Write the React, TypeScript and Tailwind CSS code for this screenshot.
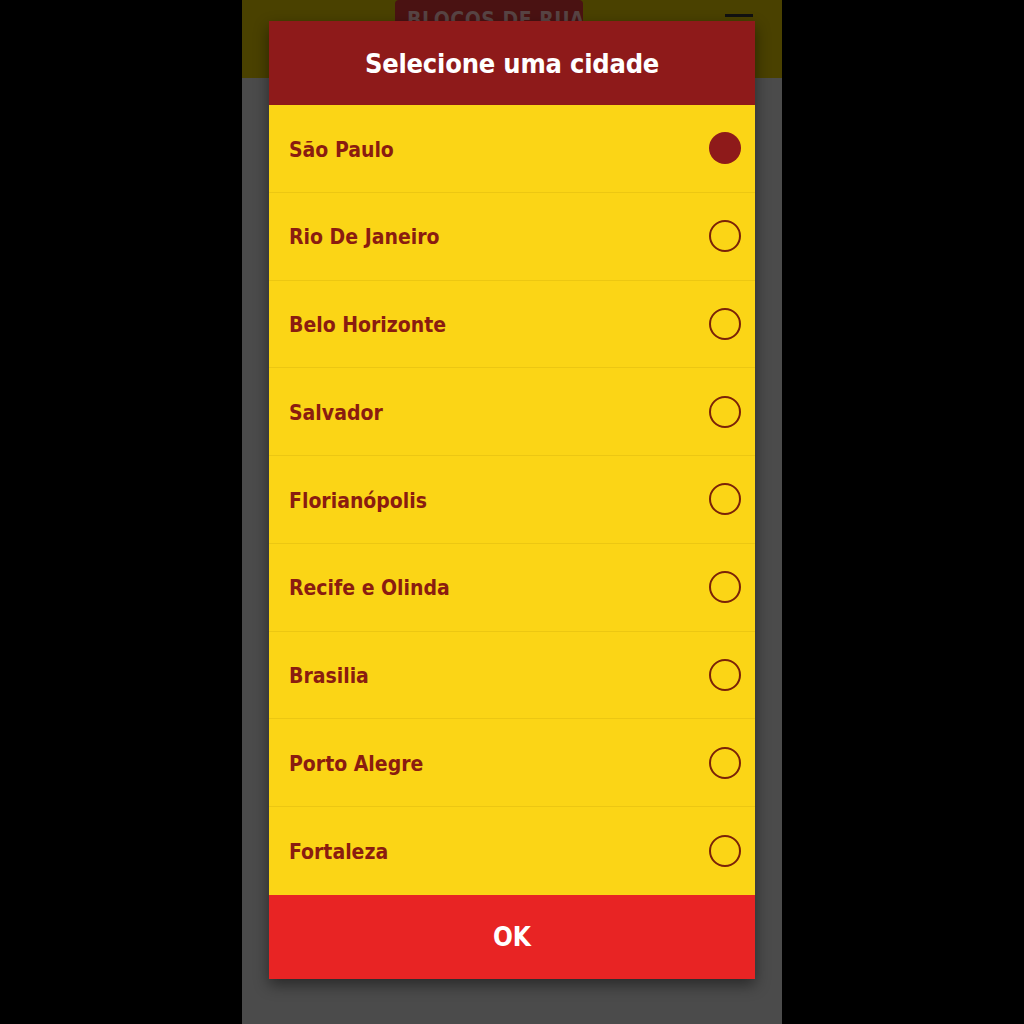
import { useState } from "react";

const cities = [
    "São Paulo",
    "Rio De Janeiro",
    "Belo Horizonte",
    "Salvador",
    "Florianópolis",
    "Recife e Olinda",
    "Brasilia",
    "Porto Alegre",
    "Fortaleza",
];

const font = { fontFamily: '"DejaVu Sans Condensed", "DejaVu Sans", sans-serif' };

export default function App() {
    const [selected, setSelected] = useState(0);

    return (
        <div className="flex h-[1024px] w-[1024px] justify-center bg-black" style={font}>
            <div className="relative flex h-full w-[540px] flex-col bg-[#4b4b4b]">
                {/* dimmed app header behind the dialog */}
                <div className="flex h-[78px] items-start bg-[#4a4100]">
                    <div className="ml-[153px] h-[40px] w-[188px] rounded-sm bg-[#4a1212] pl-3 pt-[10px]">
                        <span className="whitespace-nowrap text-[21px] font-bold leading-none tracking-wide text-[#584444]">BLOCOS DE RUA</span>
                    </div>
                    <div className="ml-auto mr-[29px] mt-[14px] h-[3px] w-[28px] bg-[#111]" />
                </div>

                {/* dialog */}
                <div className="absolute left-[27px] top-[21px] flex w-[486px] flex-col shadow-[0_6px_14px_rgba(0,0,0,0.45)]">
                    <div className="flex h-[84px] items-center justify-center bg-[#8e1a1a] pt-[3px]">
                        <h1 className="text-[27px] font-bold tracking-[-0.2px] text-white">Selecione uma cidade</h1>
                    </div>
                    <ul className="bg-[#fbd516]">
                        {cities.map((city, i) => (
                            <li
                                key={city}
                                onClick={() => setSelected(i)}
                                className={`flex h-[87.75px] cursor-pointer items-center justify-between pl-[20px] pr-[14px] ${i < cities.length - 1 ? "border-b border-[#ecc712]" : ""}`}
                            >
                                <span className="pt-[4px] text-[21px] font-bold text-[#8a1c10]">{city}</span>
                                {i === selected ? (
                                    <span className="h-[32px] w-[32px] rounded-full bg-[#8e1a1a]" />
                                ) : (
                                    <span className="h-[32px] w-[32px] rounded-full border-2 border-[#7a2208]" />
                                )}
                            </li>
                        ))}
                    </ul>
                    <button className="flex h-[84px] items-center justify-center bg-[#e82424] pt-[2px] text-[26px] font-bold text-white">
                        OK
                    </button>
                </div>
            </div>
        </div>
    );
}
